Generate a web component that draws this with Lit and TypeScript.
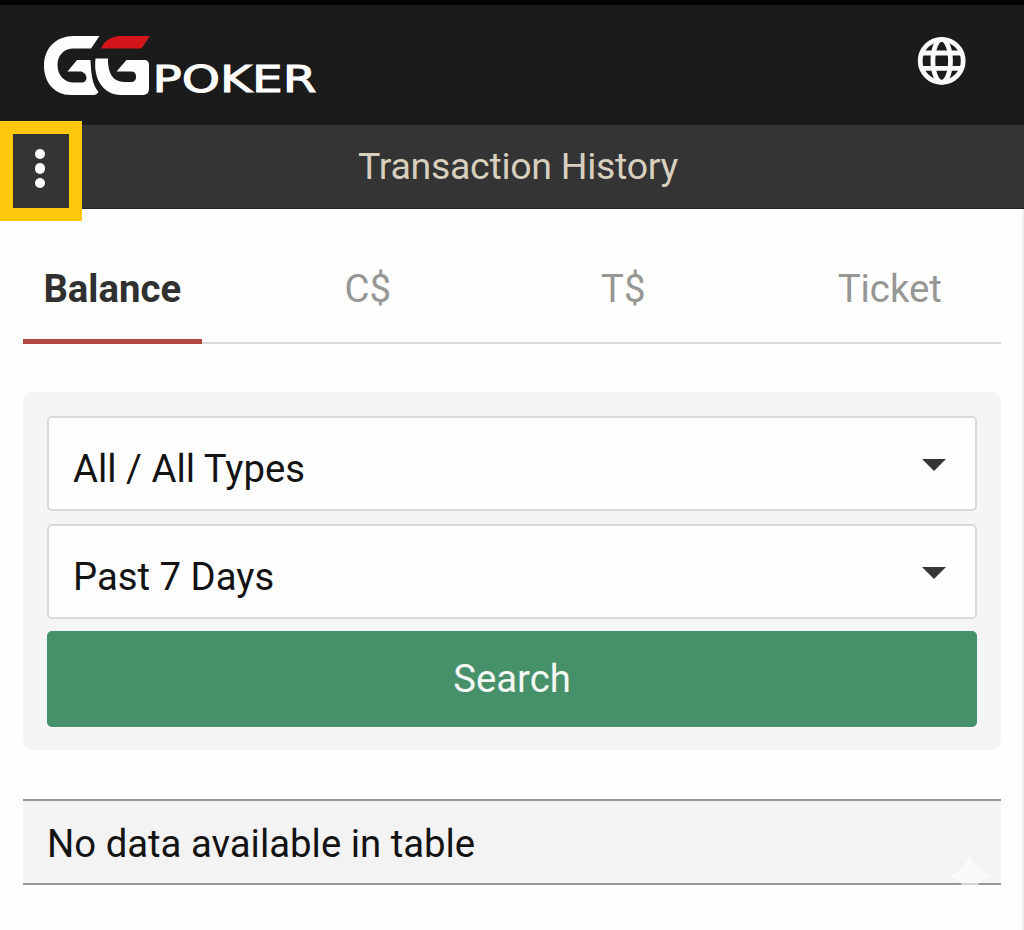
import { LitElement, css, html } from 'lit';
import { customElement, property, state } from 'lit/decorators.js';
import { classMap } from 'lit/directives/class-map.js';


@customElement('gg-header')
export class GgHeader extends LitElement {
    static override styles = css`
    :host {
        display: flex;
        justify-content: space-between;
        box-sizing: border-box;
        height: 125px;
        padding: 26px 53px 0 36px;
        border-top: 5px solid #040404;
        background: #1b1b1b;
    }
    svg {
        display: block;
    }
    .poker {
        font-family: "DejaVu Sans", sans-serif;
        font-size: 37px;
    }
    `;

    override render() {
    return html`
    <svg class="logo" width="290" height="74" viewBox="36 31 290 74">
      <g fill="#fefefe">
        <path d="M99.500 36 L91 48.500 H74 C63 48.500 57.500 56 57.500 65 C57.500 75 64 82.500 74 82.500 H82 C87 82.500 88 76 84 73 L81.500 71.500 H67.500 L77 60 H90.500 C91 72 92 85 98.500 92 C97 94.500 95 95 92 95 H71 C54 95 44 82 44 66 C44 48 56 36 74 36 Z"/>
        <path d="M95.500 58.500 H108 C107.500 73 113 82 124 82 H132 C137.500 82 137.500 71.500 132 71.500 H116.500 L126.500 60 H144 C147.500 60 149 62 149 65 V88 C149 93 147 95 142 95 H121 C104 95 93 80 95.500 58.500 Z"/>
      </g>
      <path fill="#d2161b" d="M101 48.500 C104 41 111 36 121 36 H150 L141.500 48.500 Z"/>
      <text class="poker" x="152.500" y="92" textLength="164" lengthAdjust="spacingAndGlyphs" fill="#fefefe" stroke="#fefefe" stroke-width="1">POKER</text>
    </svg>
    <svg class="globe" width="58" height="62" viewBox="913 31 58 62" fill="none" stroke="#fbfaf8" stroke-width="4.800">
      <circle cx="941.700" cy="60.800" r="21.500"/>
      <ellipse cx="941.700" cy="60.800" rx="8.800" ry="21.500"/>
      <path d="M922 53 H961.500 M922 68.300 H961.500"/>
    </svg>`;
    }
}

@customElement('gg-select')
export class GgSelect extends LitElement {
    @property({ type: String })
    value: string = '';

    static override styles = css`
    :host {
        display: flex;
        align-items: center;
        justify-content: space-between;
        box-sizing: border-box;
        height: 95px;
        padding: 11px 29px 0 24px;
        border: 2px solid #d9d9d9;
        border-radius: 5px;
        background: #fefefe;
        color: #131313;
        cursor: pointer;
    }
    .arrow {
        margin-bottom: 9px;
        border: 12px solid transparent;
        border-top-color: #363636;
        border-bottom: 0;
    }
    `;

    override render() {
    return html`<span>${this.value}</span><span class="arrow"></span>`;
    }
}

@customElement('app-root')
export class AppRoot extends LitElement {
    @property({ type: Array })
    tabs: string[] = ['Balance', 'C$', 'T$', 'Ticket'];

    @state()
    activeTab: string = 'Balance';

    static override styles = css`
    :host {
        display: block;
        position: relative;
        box-sizing: border-box;
        height: 930px;
        overflow: hidden;
        background: #fefefd;
        color: #131313;
        font-family: Roboto, sans-serif;
        font-size: 38.300px;
        line-height: 46px;
    }
    .titleBar {
        position: relative;
        box-sizing: border-box;
        height: 84px;
        padding: 18px 0 0 12px;
        border-bottom: 1px solid #222;
        background: #343434;
        color: #d8cfbf;
        font-size: 37.500px;
        letter-spacing: -.3px;
        text-align: center;
    }
    .menu {
        position: absolute;
        top: -4px;
        left: 0;
        display: flex;
        flex-direction: column;
        align-items: center;
        justify-content: center;
        gap: 4px;
        box-sizing: border-box;
        width: 82px;
        height: 100px;
        padding: 0 2px 5px 0;
        border: 13px solid #fdc70c;
        background: #343434;
    }
    .dot {
        width: 10.500px;
        height: 10.500px;
        border-radius: 50%;
        background: #fefefe;
    }
    .content {
        box-sizing: border-box;
        height: 721px;
        padding: 40px 21px 0 23px;
        border-right: 2px solid #efeff1;
    }
    .tabs {
        display: flex;
        gap: 77px;
        height: 95px;
        box-shadow: inset 0 -2px #d9d9d9;
    }
    .tab {
        box-sizing: border-box;
        width: 178.500px;
        padding-top: 17px;
        color: #969694;
        text-align: center;
        cursor: pointer;
    }
    .tab:last-child {
        margin-left: 11px;
    }
    .tab.active {
        border-bottom: 5px solid #b1463f;
        color: #303030;
        font-weight: 700;
    }
    .filters {
        display: flex;
        flex-direction: column;
        gap: 13px;
        margin-top: 48px;
        padding: 24px 24px 23px;
        border-radius: 10px;
        background: #f5f5f5;
    }
    .search {
        height: 96px;
        margin-top: -1px;
        padding: 0;
        border: 0;
        border-radius: 5px;
        background: #47916a;
        color: #f4f8f4;
        font: inherit;
    }
    .empty {
        box-sizing: border-box;
        height: 86px;
        margin-top: 49px;
        padding: 20px 24px;
        border: solid #979797;
        border-width: 2px 0;
        background: #f3f3f3;
    }
    .sparkle {
        position: absolute;
        left: 946px;
        top: 852px;
    }
    `;

    override render() {
    return html`
    <gg-header></gg-header>
    <div class="titleBar">
      <div class="menu">
        <span class="dot"></span><span class="dot"></span><span class="dot"></span>
      </div>
      <span class="title">Transaction History</span>
    </div>
    <div class="content">
      <div class="tabs">
        ${this.tabs.map(tab => html`<div
          class=${classMap({ tab: true, active: tab === this.activeTab })}
          @click=${() => this.activeTab = tab}>${tab}</div>`)}
      </div>
      <div class="filters">
        <gg-select value="All / All Types"></gg-select>
        <gg-select value="Past 7 Days"></gg-select>
        <button class="search">Search</button>
      </div>
      <div class="empty">No data available in table</div>
    </div>
    <svg class="sparkle" width="48" height="48" viewBox="0 0 48 48">
      <path fill="#fff" fill-opacity=".6" d="M24 3 C28 13 35 20 45 24 C35 28 28 35 24 45 C20 35 13 28 3 24 C13 20 20 13 24 3 Z"/>
    </svg>`;
    }
}
